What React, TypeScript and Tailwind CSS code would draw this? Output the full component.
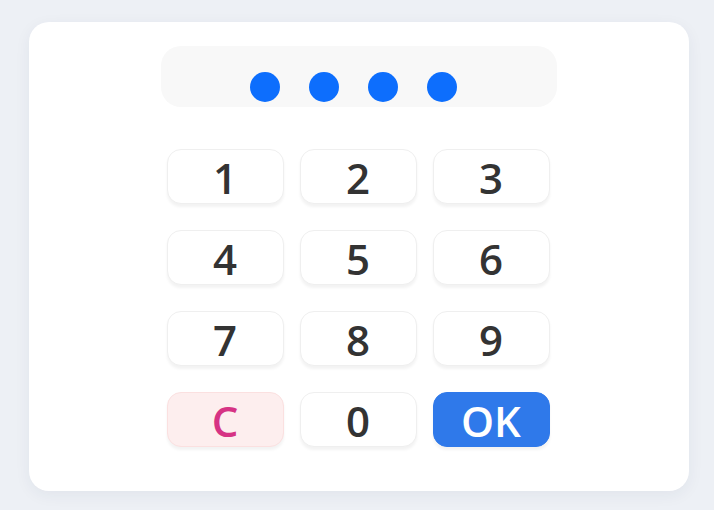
import React from 'react'

const keys = ['1', '2', '3', '4', '5', '6', '7', '8', '9', 'C', '0', 'OK']

export default function App() {
  return (
    <div
      className="w-[714px] h-[510px] bg-[#edf0f5] pt-[22px] pl-[29px]"
      style={{ fontFamily: '"Open Sans", "Noto Sans", sans-serif' }}
    >
      <div className="w-[660px] h-[469px] bg-white rounded-[20px] shadow-[0_4px_16px_rgba(30,50,90,0.06)] flex flex-col items-center pt-[24px]">
        {/* PIN display */}
        <div className="w-[396px] h-[61px] bg-[#f8f8f8] rounded-[20px] flex items-center justify-center gap-[29px] pt-[21px] pr-[12px]">
          {[0, 1, 2, 3].map((i) => (
            <span key={i} className="w-[30px] h-[30px] rounded-full bg-[#0d6efd]" />
          ))}
        </div>

        {/* Keypad */}
        <div className="grid grid-cols-[117px_117px_117px] gap-x-[16px] gap-y-[26px] mt-[42px] ml-[-2px]">
          {keys.map((k) => {
            let cls = 'bg-white border border-[#efefef] text-[#333333]'
            if (k === 'C') cls = 'bg-[#fdeeee] border border-[#fbe0e0] text-[#d63384]'
            if (k === 'OK') cls = 'bg-[#2f79ea] border border-[#2f79ea] text-white'
            return (
              <button
                key={k}
                className={`h-[55px] rounded-[14px] flex items-center justify-center text-[42px] font-semibold leading-none pt-[2px] shadow-[0_3px_3px_rgba(0,0,0,0.05)] ${cls}`}
              >
                {k}
              </button>
            )
          })}
        </div>
      </div>
    </div>
  )
}
